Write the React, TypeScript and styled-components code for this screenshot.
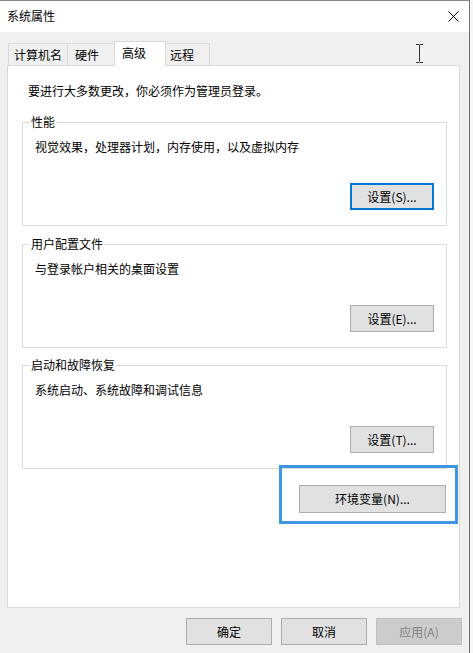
import styled, { createGlobalStyle } from 'styled-components'

const GlobalStyle = createGlobalStyle`
  html, body {
    margin: 0;
    padding: 0;
    background: #f4f4f4;
  }
  body {
    font-family: "Noto Sans CJK SC", "Noto Sans", sans-serif;
    font-size: 12px;
    color: #000;
  }
`

const Screen = styled.div`
  display: flex;
  width: 473px;
  height: 653px;
  overflow: hidden;
`

const Window = styled.div`
  position: relative;
  width: 470px;
  height: 653px;
  box-sizing: border-box;
  border-top: 1px solid #8a8a8a;
  border-right: 1px solid #6e6e6e;
  background: #f0f0f0;
  display: flex;
  flex-direction: column;
`

const Outside = styled.div`
  flex: 1;
  background: #f6f6f6;
`

const TitleBar = styled.div`
  height: 30px;
  flex-shrink: 0;
  background: #fff;
  display: flex;
  align-items: center;
  justify-content: space-between;
  padding: 0 10px 1px 7px;
  line-height: 16px;
`

const Body = styled.div`
  flex: 1;
  display: flex;
  flex-direction: column;
  padding: 9px 7px 0 7px;
`

const TabStrip = styled.div`
  display: flex;
  align-items: flex-end;
  height: 24px;
  margin-left: 2px;
`

const Tab = styled.div<{ $w: number; $pl: number; $active?: boolean }>`
  box-sizing: border-box;
  position: relative;
  z-index: ${(p) => (p.$active ? 1 : 0)};
  width: ${(p) => p.$w}px;
  height: ${(p) => (p.$active ? 25 : 22)}px;
  margin-left: -1px;
  margin-bottom: ${(p) => (p.$active ? -1 : 0)}px;
  padding-left: ${(p) => p.$pl}px;
  border: 1px solid #d9d9d9;
  border-bottom: none;
  background: ${(p) => (p.$active ? '#fff' : '#f0f0f0')};
  line-height: ${(p) => (p.$active ? 22 : 21)}px;
  white-space: nowrap;
`

const Panel = styled.div`
  box-sizing: border-box;
  width: 453px;
  height: 543px;
  background: #fff;
  border: 1px solid #d9d9d9;
  display: flex;
  flex-direction: column;
`

const Intro = styled.div`
  margin: 17px 0 0 20px;
  line-height: 16px;
`

const GroupBox = styled.fieldset<{ $mt: number }>`
  box-sizing: border-box;
  margin: ${(p) => p.$mt}px 12px 0 14px;
  padding: 0 0 15px 0;
  border: 1px solid #dcdcdc;
  min-width: 0;
`

const Legend = styled.legend`
  margin-left: 7px;
  padding: 0 1px;
  line-height: 16px;
`

const Desc = styled.div`
  margin: 9px 0 0 12px;
  line-height: 16px;
`

const ButtonRow = styled.div`
  display: flex;
  justify-content: flex-end;
  margin: 28px 12px 0 0;
`

const Button = styled.button<{ $w: number; $h?: number; $focused?: boolean }>`
  box-sizing: border-box;
  width: ${(p) => p.$w}px;
  height: ${(p) => p.$h ?? 27}px;
  padding: 0;
  background: #e1e1e1;
  border: ${(p) => (p.$focused ? '2px solid #0078d7' : '1px solid #adadad')};
  font-family: inherit;
  font-size: 12px;
  line-height: 16px;
  color: #000;

  &:disabled {
    background: #cccccc;
    border-color: #bfbfbf;
    color: #838383;
  }
`

const Highlight = styled.div`
  align-self: flex-end;
  display: flex;
  margin: -4px 1px 0 0;
  padding: 17px 9px 8px 17px;
  border: 3px solid #3d97e3;
`

const Footer = styled.div`
  display: flex;
  justify-content: flex-end;
  gap: 9px;
  margin-top: 10px;
`

const Cursor = styled.svg`
  position: absolute;
  left: 416px;
  top: 43px;
`

const tabs = [
  { label: '计算机名', w: 60, pl: 5 },
  { label: '硬件', w: 48, pl: 7 },
  { label: '高级', w: 52, pl: 7, active: true },
  { label: '远程', w: 45, pl: 4 },
]

const groups = [
  { title: '性能', desc: '视觉效果，处理器计划，内存使用，以及虚拟内存', btn: '设置(S)...', mt: 15, focused: true },
  { title: '用户配置文件', desc: '与登录帐户相关的桌面设置', btn: '设置(E)...', mt: 10 },
  { title: '启动和故障恢复', desc: '系统启动、系统故障和调试信息', btn: '设置(T)...', mt: 9 },
]

export default function App() {
  return (
    <Screen>
      <GlobalStyle />
      <Window>
        <TitleBar>
          <span>系统属性</span>
          <svg width="11" height="11" viewBox="0 0 11 11">
            <path d="M0.5 0.5 L10.5 10.5 M10.5 0.5 L0.5 10.5" stroke="#000" strokeWidth="1" fill="none" />
          </svg>
        </TitleBar>
        <Body>
          <TabStrip>
            {tabs.map((t) => (
              <Tab key={t.label} $w={t.w} $pl={t.pl} $active={t.active}>
                {t.label}
              </Tab>
            ))}
          </TabStrip>
          <Panel>
            <Intro>要进行大多数更改，你必须作为管理员登录。</Intro>
            {groups.map((g) => (
              <GroupBox key={g.title} $mt={g.mt}>
                <Legend>{g.title}</Legend>
                <Desc>{g.desc}</Desc>
                <ButtonRow>
                  <Button $w={84} $focused={g.focused}>{g.btn}</Button>
                </ButtonRow>
              </GroupBox>
            ))}
            <Highlight>
              <Button $w={147} $h={28}>环境变量(N)...</Button>
            </Highlight>
          </Panel>
          <Footer>
            <Button $w={86}>确定</Button>
            <Button $w={86}>取消</Button>
            <Button $w={86} disabled>应用(A)</Button>
          </Footer>
        </Body>
        <Cursor width="8" height="19" viewBox="0 0 8 19">
          <path
            d="M0 0.5 H3 L3.5 1 L4 0.5 H7 M3.5 1 V17.5 M0 18.5 H3 L3.5 18 L4 18.5 H7"
            stroke="#333"
            strokeWidth="1"
            fill="none"
          />
        </Cursor>
      </Window>
      <Outside />
    </Screen>
  )
}
